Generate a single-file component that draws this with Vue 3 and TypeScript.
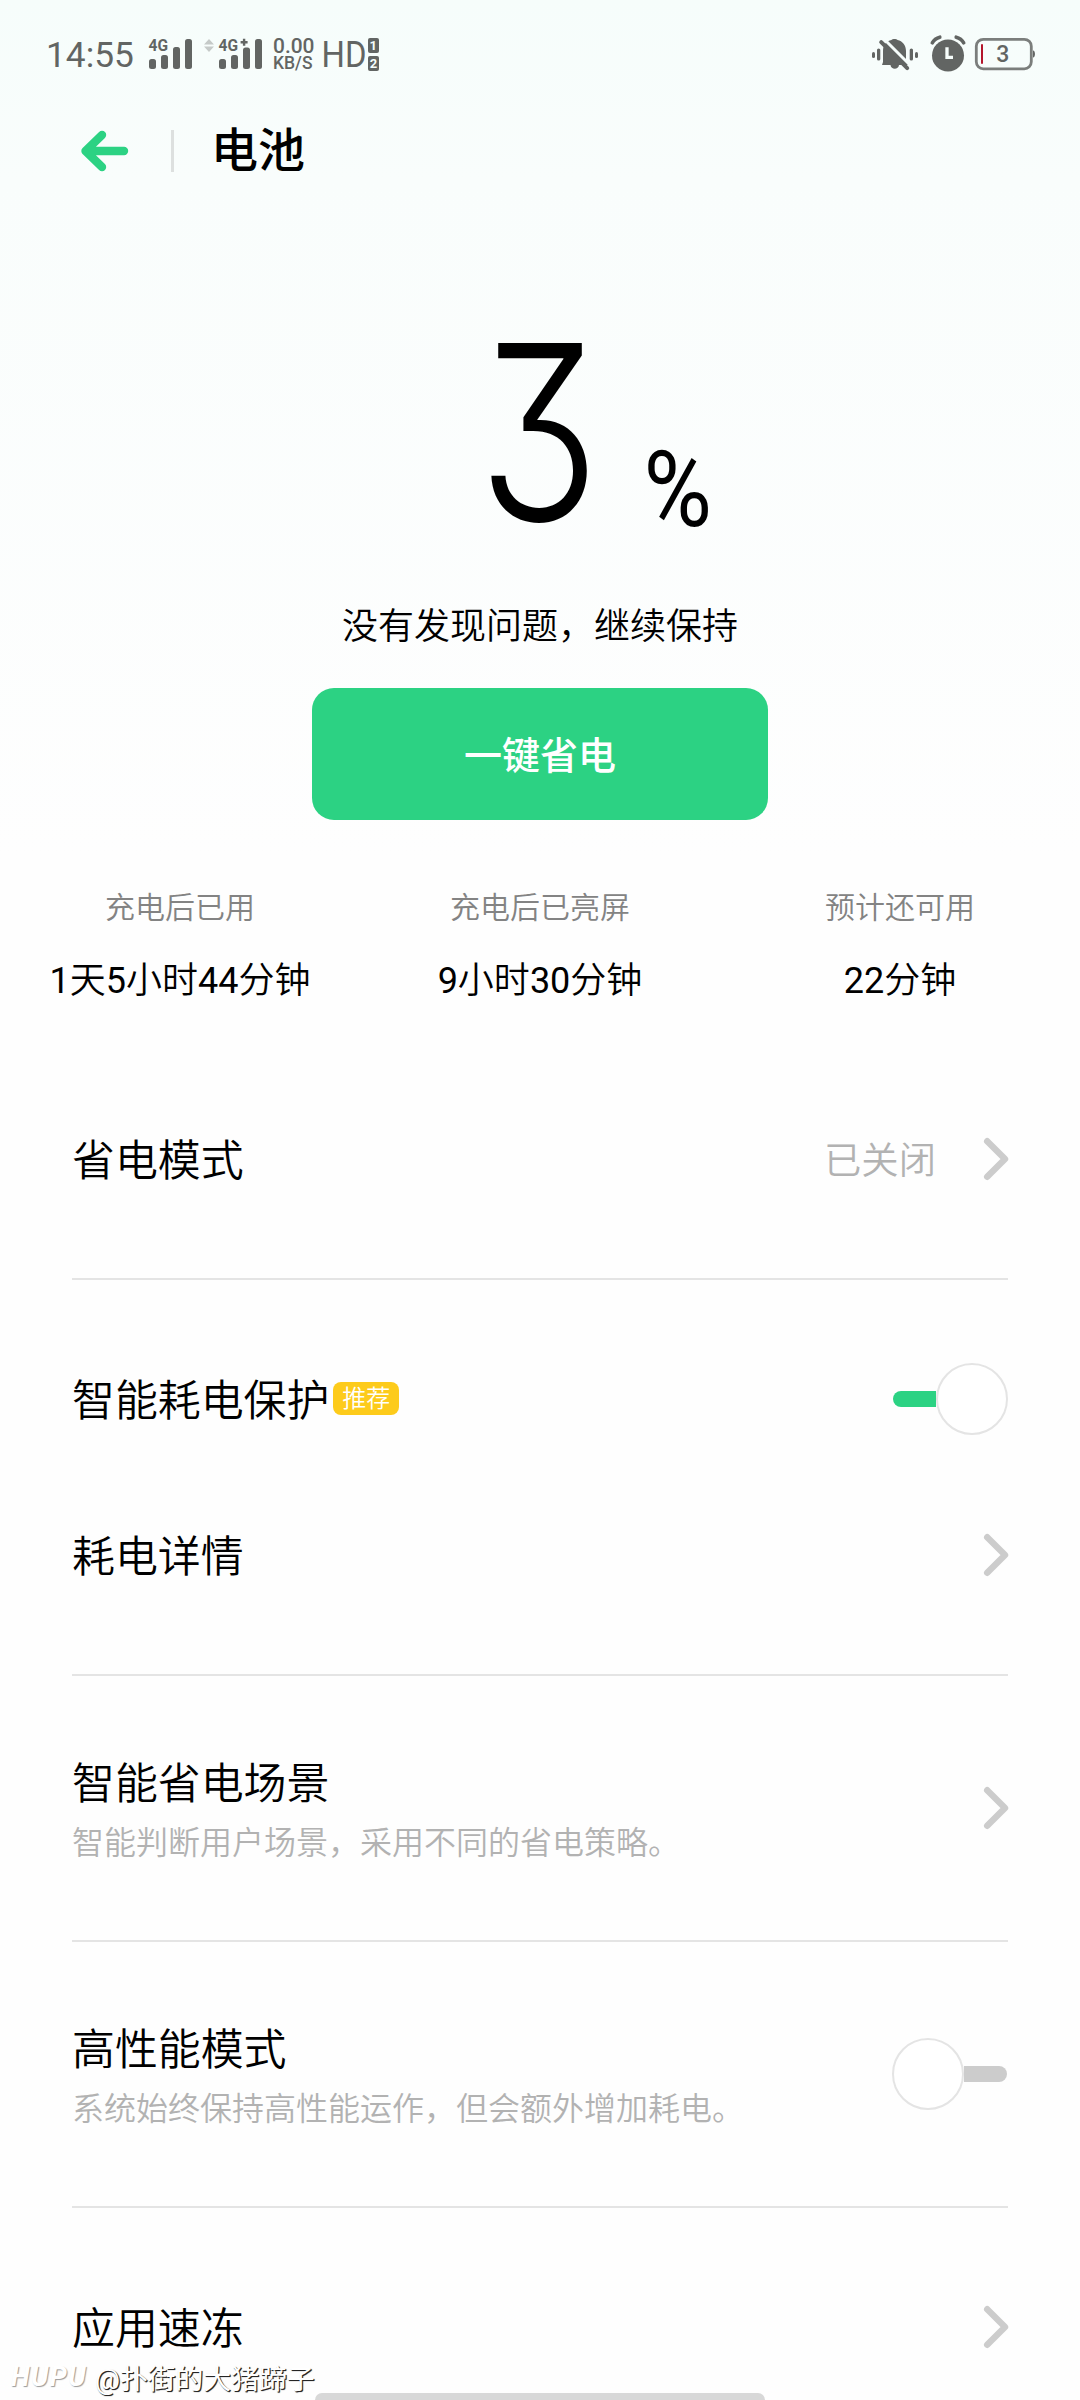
<script setup lang="ts">
interface Stat {
  label: string
  value: string
}

interface Row {
  title: string
  sub?: string
  badge?: string
  value?: string
  toggle?: boolean
}

const stats: Stat[] = [
  { label: '充电后已用', value: '1天5小时44分钟' },
  { label: '充电后已亮屏', value: '9小时30分钟' },
  { label: '预计还可用', value: '22分钟' },
]

const groups: Row[][] = [
  [{ title: '省电模式', value: '已关闭' }],
  [{ title: '智能耗电保护', badge: '推荐', toggle: true }, { title: '耗电详情' }],
  [{ title: '智能省电场景', sub: '智能判断用户场景，采用不同的省电策略。' }],
  [{ title: '高性能模式', sub: '系统始终保持高性能运作，但会额外增加耗电。', toggle: false }],
  [{ title: '应用速冻' }],
]

// Splits a duration into runs of digits and runs of units.
const parts = (value: string): string[] => value.match(/\d+|\D+/g) ?? []
const isNumber = (part: string): boolean => /^\d/.test(part)
</script>

<template>
  <main class="screen">
    <div class="status">
      <span class="time">14:55</span>
      <svg class="net" width="236" height="40" viewBox="0 0 236 40">
        <g fill="#626563">
          <rect x="3" y="25" width="7" height="10" rx="2.5" />
          <rect x="15" y="21" width="7" height="14" rx="2.5" />
          <rect x="27" y="13" width="7" height="22" rx="2.5" />
          <rect x="39" y="5" width="7" height="30" rx="2.5" />
          <text x="2.6" y="17.3" class="gen" textLength="19.5" lengthAdjust="spacingAndGlyphs">4G</text>
          <path d="M58 10.500h10l-5-5.500zM58 12.500h10l-5 5.500z" fill="#c5cac8" />
          <rect x="73" y="25" width="7" height="10" rx="2.5" />
          <rect x="85" y="21" width="7" height="14" rx="2.5" />
          <rect x="97" y="13.500" width="7" height="21.500" rx="2.5" />
          <rect x="109" y="5" width="7" height="30" rx="2.5" />
          <text x="72.600" y="17.300" class="gen" textLength="19.500" lengthAdjust="spacingAndGlyphs">4G</text>
          <path d="M96.900 4.800h2.400v2.300h2.300v2.400h-2.300v2.300h-2.400v-2.300h-2.300v-2.400h2.300z" />
          <text x="127" y="18.600" class="rate" font-size="21" textLength="41.500" lengthAdjust="spacingAndGlyphs">0.00</text>
          <text x="127" y="35" class="rate" font-size="18" textLength="39.500" lengthAdjust="spacingAndGlyphs">KB/S</text>
          <text x="175.500" y="33" font-size="36" font-weight="450" textLength="45" lengthAdjust="spacingAndGlyphs">HD</text>
          <rect x="222" y="4" width="11" height="15" rx="2" />
          <rect x="222" y="22" width="11" height="15" rx="2" />
        </g>
        <g fill="#f6fdfb" font-size="13" font-weight="700" text-anchor="middle">
          <text x="227.300" y="16.200">1</text>
          <text x="227.500" y="34.200">2</text>
        </g>
      </svg>
      <svg class="sys" width="170" height="40" viewBox="0 0 170 40">
        <g fill="#626563">
          <rect x="2" y="18" width="3" height="6" rx="1.500" />
          <rect x="7" y="14.500" width="3.300" height="12" rx="1.600" />
          <rect x="39.700" y="14.500" width="3.300" height="12" rx="1.600" />
          <rect x="45" y="18" width="3" height="6" rx="1.500" />
          <path d="M12 31l1-3V17c0-6 3.500-10.200 8.500-11 1-1.300 5-1.300 6 0 5 1 8.500 5.500 8.500 11v9l2 5H29c-.5 5-8 5-8.500 0z" />
          <path d="M15.500 6.500 39 30" stroke="#f6fdfb" stroke-width="3" />
          <path d="M11.200 8.200 37.200 34.200" stroke="#626563" stroke-width="4" stroke-linecap="round" />
          <circle cx="78" cy="21.500" r="16" />
          <path d="M62.300 8.200C64 5.200 66.500 3.400 69.800 2.600M93.700 8.200C92 5.200 89.500 3.400 86.200 2.600" transform="translate(0 .6)" fill="none" stroke="#626563" stroke-width="3.600" stroke-linecap="round" />
          <path d="M77 13.200v10.200h6" fill="none" stroke="#f6fdfb" stroke-width="3.300" />
          <rect x="106.300" y="5.300" width="55" height="29.500" rx="7" fill="none" stroke="#7b7e7c" stroke-width="2.800" />
          <path d="M163 16.500c2.600 0 2.600 7 0 7z" />
          <rect x="111" y="10" width="2" height="20" rx="1" fill="#b3152b" />
          <text x="132.800" y="27.800" font-size="23" font-weight="500" text-anchor="middle">3</text>
        </g>
      </svg>
    </div>

    <header class="header">
      <svg class="back" width="50" height="42" viewBox="0 0 50 42">
        <path d="M23 5 6.500 21 23 37M7 21h38" fill="none" stroke="#2cd283" stroke-width="8.400" stroke-linecap="round" stroke-linejoin="round" />
      </svg>
      <i class="bar"></i>
      <h1>电池</h1>
    </header>

    <section class="level">
      <svg width="300" height="220" viewBox="0 0 300 220">
        <text class="digit" transform="translate(54 196.500) scale(.82 1)">3</text>
        <text class="percent" transform="translate(219.500 202) scale(.89 1)">%</text>
      </svg>
    </section>

    <p class="message">没有发现问题，继续保持</p>
    <button class="save">一键省电</button>

    <section class="stats">
      <div v-for="s in stats" :key="s.label" class="stat">
        <span class="label">{{ s.label }}</span>
        <span class="value"><span v-for="(part, i) in parts(s.value)" :key="i" :class="{ number: isNumber(part) }">{{ part }}</span></span>
      </div>
    </section>

    <section class="list">
      <div v-for="(group, i) in groups" :key="i" class="group">
        <div v-for="row in group" :key="row.title" class="row" :class="{ tall: row.sub }">
          <div class="texts">
            <div class="title">{{ row.title }}<span v-if="row.badge" class="badge">{{ row.badge }}</span></div>
            <div v-if="row.sub" class="sub">{{ row.sub }}</div>
          </div>
          <span v-if="row.value" class="state">{{ row.value }}</span>
          <span v-if="row.toggle !== undefined" class="toggle" :class="{ on: row.toggle }"><i class="knob"></i></span>
          <svg v-else class="chevron" width="24" height="42" viewBox="0 0 24 42">
            <path d="M3.200 3.200 21 21 3.200 38.800" fill="none" stroke="#ccc" stroke-width="6.400" stroke-linecap="round" stroke-linejoin="round" />
          </svg>
        </div>
      </div>
    </section>

    <div class="watermark"><span class="brand">HUPU</span><span class="user">@扑街的大猪蹄子</span></div>
    <i class="home"></i>
  </main>
</template>

<style>
body {
  background: #fefefe;
}
</style>

<style scoped>
.screen {
  position: relative;
  box-sizing: border-box;
  width: 1080px;
  height: 2400px;
  overflow: hidden;
  background: linear-gradient(#f6fdfb 0, #f9fdfc 180px, #fefefe 860px);
  color: #000;
  font-family: Roboto, "Noto Sans CJK SC", sans-serif;
  font-weight: 350;
}
svg {
  overflow: visible;
  font-weight: 400;
}
.status {
  display: flex;
  align-items: center;
  height: 108px;
  padding: 0 40px 0 46px;
}
.time {
  width: 100px;
  font-size: 35.3px;
  font-weight: 450;
  line-height: 42px;
  padding-top: 2px;
  color: #626563;
}
.net {
  font-family: Roboto, sans-serif;
}
.gen {
  font-size: 17px;
  font-weight: 700;
}
.rate {
  font-weight: 500;
}
.sys {
  margin-left: auto;
}
.header {
  display: flex;
  align-items: center;
  height: 86px;
  padding-left: 79px;
}
.bar {
  width: 3px;
  height: 42px;
  margin: 0 37px 0 42px;
  background: #dde0df;
}
h1 {
  margin: 0;
  font-size: 47px;
  line-height: 60px;
  font-weight: 500;
}
.level {
  display: flex;
  justify-content: center;
  height: 220px;
  margin-top: 130px;
  padding-left: 68px;
}
.digit {
  font-family: Inter, sans-serif;
  font-size: 244px;
  font-weight: 300;
  font-feature-settings: "cv09" 1;
}
.percent {
  font-family: Roboto, sans-serif;
  font-size: 105px;
  font-weight: 400;
}
.message {
  margin: 58px 0 0;
  font-size: 36px;
  line-height: 50px;
  text-align: center;
}
.save {
  display: block;
  width: 456px;
  height: 132px;
  margin: 36px auto 0;
  padding: 3px 0 0;
  border: 0;
  border-radius: 22px;
  background: #2cd283;
  color: #fff;
  font: 500 38px/50px Roboto, "Noto Sans CJK SC", sans-serif;
}
.stats {
  display: grid;
  grid-template-columns: repeat(3, 1fr);
  margin-top: 67px;
  text-align: center;
}
.stat {
  display: flex;
  flex-direction: column;
}
.label {
  font-size: 30px;
  line-height: 42px;
  color: #838383;
}
.value {
  margin-top: 27px;
  font-size: 36px;
  line-height: 50px;
}
.number {
  font-weight: 400;
}
.list {
  padding: 75px 72px 0;
}
.group + .group {
  margin-top: 41px;
  padding-top: 41px;
  border-top: 2px solid #e4e4e4;
}
.row {
  display: flex;
  align-items: center;
  height: 156px;
}
.tall {
  height: 182px;
}
.texts {
  flex: 1;
  padding-top: 3px;
}
.tall .texts {
  padding-top: 9px;
}
.title {
  display: flex;
  align-items: center;
  font-size: 42.9px;
  line-height: 60px;
}
.badge {
  width: 66px;
  height: 33px;
  margin: -4px 0 0 4px;
  border-radius: 8px;
  background: #fdcb1b;
  color: #fff;
  font-size: 24px;
  line-height: 34px;
  text-align: center;
}
.sub {
  font-size: 32px;
  line-height: 56px;
  padding-top: 1px;
  color: #b2b2b2;
}
.state {
  margin-right: 48px;
  padding-top: 3px;
  font-size: 37.33px;
  line-height: 50px;
  color: #b2b2b2;
}
.toggle {
  display: flex;
  align-items: center;
  width: 116px;
  height: 72px;
}
.toggle::after {
  content: "";
  width: 43px;
  height: 16px;
  border-radius: 0 8px 8px 0;
  background: #ccc;
}
.toggle.on {
  flex-direction: row-reverse;
}
.toggle.on::after {
  border-radius: 8px 0 0 8px;
  background: #2cd283;
}
.knob {
  box-sizing: border-box;
  width: 72px;
  height: 72px;
  border: 2px solid #e4e4e4;
  border-radius: 50%;
  background: #fff;
}
.watermark {
  position: absolute;
  left: 11px;
  bottom: 6px;
  display: flex;
  align-items: center;
  height: 34px;
  color: #fff;
  font-weight: 400;
}
.brand {
  width: 84px;
  font-size: 27px;
  font-style: italic;
  font-weight: 700;
  letter-spacing: 1.500px;
  text-shadow: 1px 1px 1px #999;
}
.user {
  font-size: 27.8px;
  text-shadow: 1px 1px 1px #222, 1px 1px 0 #444;
}
.home {
  position: absolute;
  left: 315px;
  bottom: 0;
  width: 450px;
  height: 7px;
  border-radius: 7px 7px 0 0;
  background: #d8d8d8;
}
</style>
